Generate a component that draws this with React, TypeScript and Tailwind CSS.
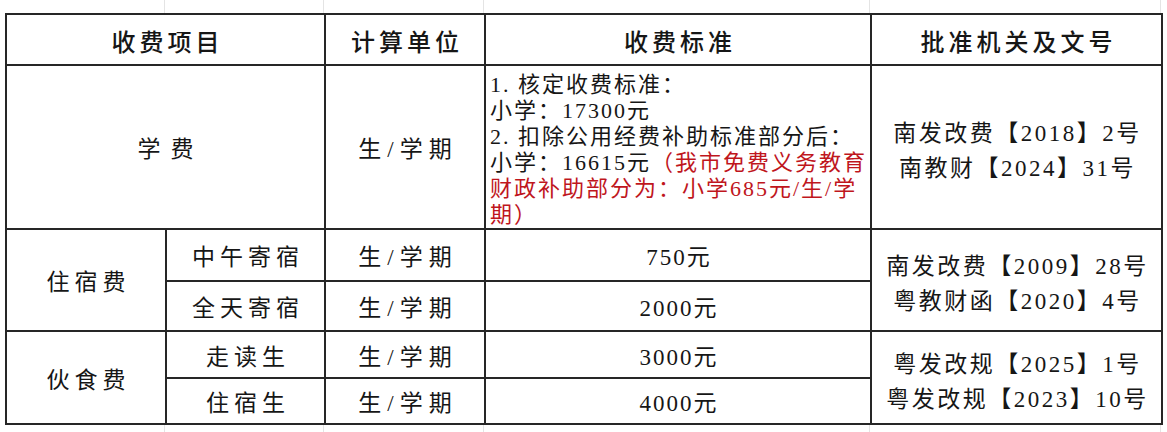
import React from "react";

const cell = "bg-white flex items-center justify-center text-[#161616] whitespace-nowrap";
const font = "font-[family-name:'Liberation_Serif','Noto_Sans_CJK_SC',serif]";

function FaintStrip({ h }: { h: string }) {
  // spreadsheet gridlines outside the bordered table
  return (
    <div className={`flex ${h}`}>
      <div className="w-[165px] border-r border-[#e4e4e4]" />
      <div className="w-[159px] border-r border-[#e4e4e4]" />
      <div className="w-[160px] border-r border-[#e4e4e4]" />
      <div className="w-[386px] border-r border-[#e4e4e4]" />
      <div className="w-[291px] border-r border-[#e4e4e4]" />
    </div>
  );
}

export default function App() {
  const head = `${cell} bg-[#fdf1cb] text-[24px] tracking-[4px] pl-[4px] pt-[6px] font-medium`;
  const body = `${cell} text-[23px] tracking-[5px] pl-[5px] pt-[7px]`;
  const unit = `${cell} text-[23px] tracking-[6px] pl-[6px] pt-[7px]`;
  const price = `${cell} text-[23px] tracking-[2px] pl-[2px] pt-[7px]`;
  const docs = `${cell} flex-col text-[23px] tracking-[2.5px] leading-[35px] pl-[2px] pt-[8px]`;

  return (
    <div className={`w-[1167px] h-[432px] bg-white overflow-hidden ${font}`}>
      <FaintStrip h="h-[13px]" />

      <div className="flex">
        <div className="ml-[5px] grid grid-cols-[158px_157px_158px_384px_289px] grid-rows-[49px_162px_50px_48px_45px_44px] gap-[2px] p-[2px] bg-[#262626]">
          {/* Header */}
          <div className={`${head} col-span-2`}>收费项目</div>
          <div className={head}>计算单位</div>
          <div className={head}>收费标准</div>
          <div className={head}>批准机关及文号</div>

          {/* 学费 */}
          <div className={`${body} col-span-2 tracking-[10px] pl-[10px]`}>学费</div>
          <div className={unit}>生/学期</div>
          <div className="bg-white text-[22px] tracking-[2px] leading-[26px] text-[#161616] pl-[4px] pt-[6px] whitespace-nowrap">
            <div>1. 核定收费标准：</div>
            <div>小学：17300元</div>
            <div>2. 扣除公用经费补助标准部分后：</div>
            <div>
              小学：16615元<span className="text-[#bf161d]">（我市免费义务教育</span>
            </div>
            <div className="text-[#bf161d]">财政补助部分为：小学685元/生/学</div>
            <div className="text-[#bf161d]">期）</div>
          </div>
          <div className={`${docs} pt-[5px]`}>
            <div>南发改费【2018】2号</div>
            <div>南教财【2024】31号</div>
          </div>

          {/* 住宿费 */}
          <div className={`${body} row-span-2`}>住宿费</div>
          <div className={body}>中午寄宿</div>
          <div className={unit}>生/学期</div>
          <div className={price}>750元</div>
          <div className={`${docs} row-span-2`}>
            <div>南发改费【2009】28号</div>
            <div>粤教财函【2020】4号</div>
          </div>
          <div className={body}>全天寄宿</div>
          <div className={unit}>生/学期</div>
          <div className={price}>2000元</div>

          {/* 伙食费 */}
          <div className={`${body} row-span-2`}>伙食费</div>
          <div className={body}>走读生</div>
          <div className={unit}>生/学期</div>
          <div className={price}>3000元</div>
          <div className={`${docs} row-span-2`}>
            <div>粤发改规【2025】1号</div>
            <div>粤发改规【2023】10号</div>
          </div>
          <div className={body}>住宿生</div>
          <div className={unit}>生/学期</div>
          <div className={price}>4000元</div>
        </div>
      </div>

      <FaintStrip h="h-[7px]" />
    </div>
  );
}
